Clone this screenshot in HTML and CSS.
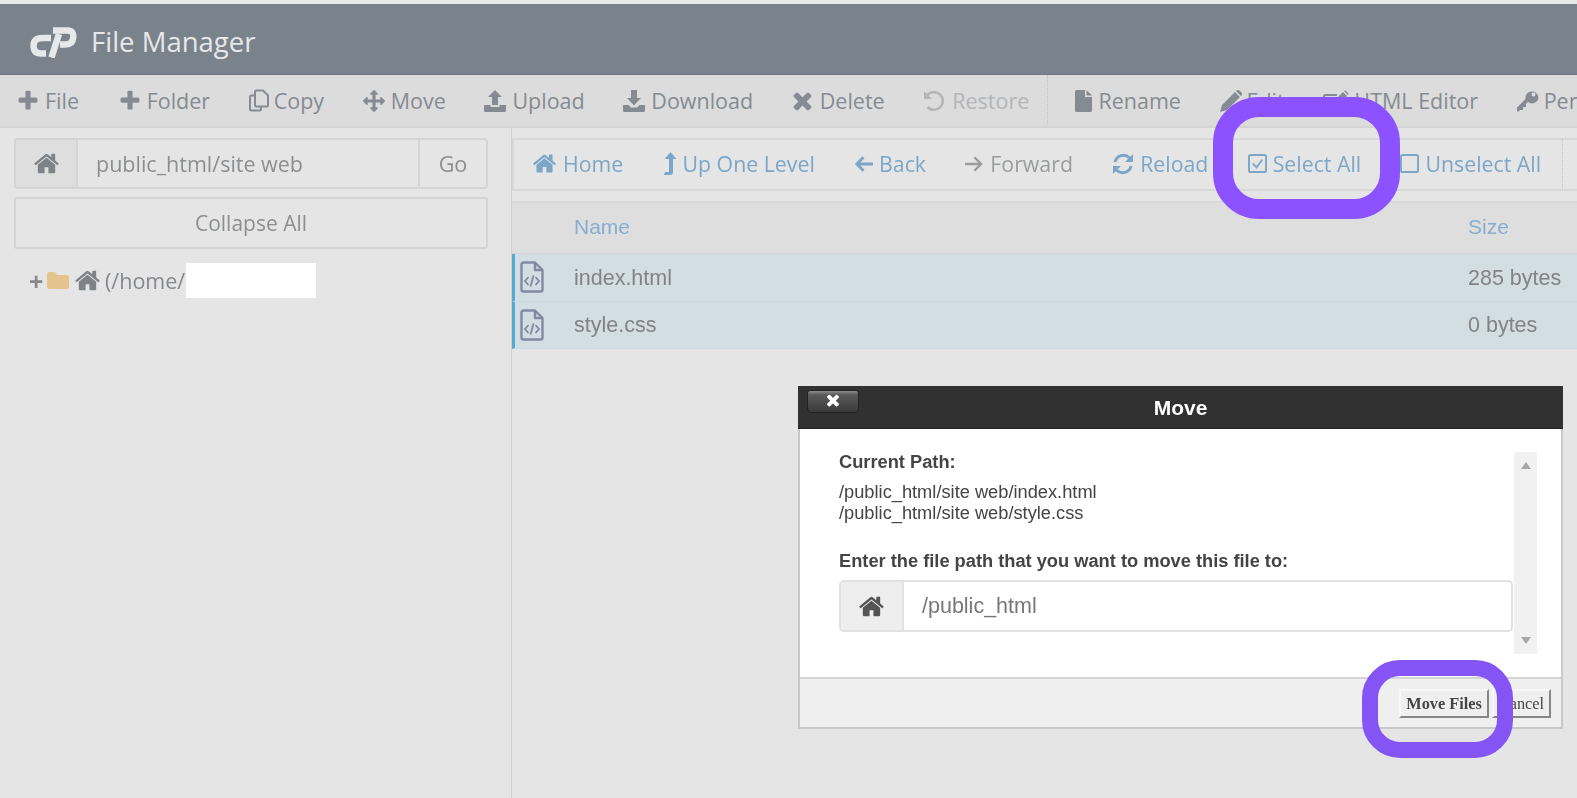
FILE: index.html
```html
<!DOCTYPE html>
<html lang="en">
<head>
<meta charset="utf-8">
<title>File Manager</title>
<link rel="stylesheet" href="styles.css">
</head>
<body>
<svg class="defs" width="0" height="0" aria-hidden="true">
  <symbol id="i-home" viewBox="0 0 1792 1792"><path d="M1472 992v480q0 26-19 45t-45 19h-384v-384h-256v384h-384q-26 0-45-19t-19-45v-480q0-1 .5-3t.5-3l575-474 575 474q1 2 1 6zm223-69l-62 74q-8 9-21 11h-3q-13 0-21-7l-692-577-692 577q-12 8-24 7-13-2-21-11l-62-74q-8-10-7-23.500t11-21.500l719-599q32-26 76-26t76 26l244 204v-195q0-14 9-23t23-9h192q14 0 23 9t9 23v408l219 182q10 8 11 21.500t-7 23.500z"/></symbol>
  <symbol id="i-plus" viewBox="0 0 1792 1792"><path d="M1600 736v192q0 40-28 68t-68 28h-416v416q0 40-28 68t-68 28h-192q-40 0-68-28t-28-68v-416h-416q-40 0-68-28t-28-68v-192q0-40 28-68t68-28h416v-416q0-40 28-68t68-28h192q40 0 68 28t28 68v416h416q40 0 68 28t28 68z"/></symbol>
  <symbol id="i-times" viewBox="0 0 1792 1792"><path d="M1490 1322q0 40-28 68l-136 136q-28 28-68 28t-68-28l-294-294-294 294q-28 28-68 28t-68-28l-136-136q-28-28-28-68t28-68l294-294-294-294q-28-28-28-68t28-68l136-136q28-28 68-28t68 28l294 294 294-294q28-28 68-28t68 28l136 136q28 28 28 68t-28 68l-294 294 294 294q28 28 28 68z"/></symbol>
  <symbol id="i-move" viewBox="0 0 1792 1792"><path d="M1792 896q0 26-19 45l-256 256q-19 19-45 19t-45-19-19-45v-128h-384v384h128q26 0 45 19t19 45-19 45l-256 256q-19 19-45 19t-45-19l-256-256q-19-19-19-45t19-45 45-19h128v-384h-384v128q0 26-19 45t-45 19-45-19l-256-256q-19-19-19-45t19-45l256-256q19-19 45-19t45 19 19 45v128h384v-384h-128q-26 0-45-19t-19-45 19-45l256-256q19-19 45-19t45 19l256 256q19 19 19 45t-19 45-45 19h-128v384h384v-128q0-26 19-45t45-19 45 19l256 256q19 19 19 45z"/></symbol>
  <symbol id="i-copy" viewBox="0 0 20 22"><path fill="none" stroke="currentColor" stroke-width="2" stroke-linejoin="round" d="M6 6H2.500A1.500 1.500 0 0 0 1 7.500V19.500A1.500 1.500 0 0 0 2.500 21H10.500A1.500 1.500 0 0 0 12 19.500V17M6 2.500A1.500 1.500 0 0 1 7.500 1H14L19 6V15.500A1.500 1.500 0 0 1 17.500 17H7.500A1.500 1.500 0 0 1 6 15.500Z"/></symbol>
  <symbol id="i-upload" viewBox="0 0 22 22"><path d="M11 0L18 7H14V15H8V7H4ZM0 15H6.500V17H15.500V15H22V20.500A1.500 1.500 0 0 1 20.500 22H1.500A1.500 1.500 0 0 1 0 20.500Z"/></symbol>
  <symbol id="i-download" viewBox="0 0 22 22"><path d="M8 0H14V8H18L11 15.500L4 8H8ZM0 15H5.500L8 17.500H14L16.500 15H22V20.500A1.500 1.500 0 0 1 20.500 22H1.500A1.500 1.500 0 0 1 0 20.500Z"/></symbol>
  <symbol id="i-restore" viewBox="0 0 22 22"><path fill="none" stroke="currentColor" stroke-width="2.600" d="M4 5.500A8.800 8.800 0 1 1 4.500 17"/><path d="M1 1L9 9H1Z"/></symbol>
  <symbol id="i-file" viewBox="0 0 17 22"><path d="M0 1.500A1.500 1.500 0 0 1 1.500 0H10V7H17V20.500A1.500 1.500 0 0 1 15.500 22H1.500A1.500 1.500 0 0 1 0 20.500ZM11.500 0L17 5.500H11.500Z"/></symbol>
  <symbol id="i-pencil" viewBox="0 0 22 22"><path d="M0 22L2 15L15 2L20 7L7 20ZM16.500 0.500Q18 -0.500 19.500 0.500L21.500 2.500Q22.500 4 21.500 5.500L21 6L16 1Z"/></symbol>
  <symbol id="i-edit" viewBox="0 0 26 22"><path fill="none" stroke="currentColor" stroke-width="2" d="M19 14V19.500A1.500 1.500 0 0 1 17.500 21H2.500A1.500 1.500 0 0 1 1 19.500V6.500A1.500 1.500 0 0 1 2.500 5H14"/><path d="M9 13L20 2L24 6L13 17H9ZM21 1Q22 0 23 1L25 3Q26 4 25 5Z"/></symbol>
  <symbol id="i-key" viewBox="0 0 22 22"><path d="M21.500 7A6.500 6.500 0 0 1 11 12L9 14V17H6V20H3L1.500 21.500H0V17.500L8.500 9A6.500 6.500 0 1 1 21.500 7ZM18.500 4.500A2 2 0 1 0 14.500 4.500A2 2 0 1 0 18.500 4.500Z" fill-rule="evenodd"/></symbol>
  <symbol id="i-up" viewBox="0 0 14 24"><path d="M7.500 0L13.500 7H10V20Q10 23 7 23H1L2 20H6V7H1.500Z"/></symbol>
  <symbol id="i-left" viewBox="0 0 20 18"><path fill="none" stroke="currentColor" stroke-width="3" d="M10 2L3 9L10 16M3 9H20"/></symbol>
  <symbol id="i-right" viewBox="0 0 20 18"><path fill="none" stroke="currentColor" stroke-width="2.400" d="M10 2L17 9L10 16M17 9H0"/></symbol>
  <symbol id="i-reload" viewBox="0 0 22 22"><path fill="none" stroke="currentColor" stroke-width="3" d="M3 9A8.500 8.500 0 0 1 17.500 5M19 13A8.500 8.500 0 0 1 4.500 17"/><path d="M21 1V9H13ZM1 21V13H9Z"/></symbol>
  <symbol id="i-check" viewBox="0 0 20 20"><rect x="1" y="1" width="18" height="18" rx="2" fill="none" stroke="currentColor" stroke-width="2"/><path fill="none" stroke="currentColor" stroke-width="2" d="M5 10L9 14L15 6"/></symbol>
  <symbol id="i-uncheck" viewBox="0 0 20 20"><rect x="1" y="1" width="18" height="18" rx="2" fill="none" stroke="currentColor" stroke-width="2"/></symbol>
  <symbol id="i-code" viewBox="0 0 24 32"><path fill="none" stroke="currentColor" stroke-width="2.400" stroke-linejoin="round" d="M15 1.500H3.500A2 2 0 0 0 1.500 3.500V28.500A2 2 0 0 0 3.500 30.500H20.500A2 2 0 0 0 22.500 28.500V9ZM15 1.500V9H22.500"/><path fill="none" stroke="currentColor" stroke-width="1.800" d="M8.500 16L5 20L8.500 24M15.500 16L19 20L15.500 24M13.500 14.500L10.500 25.500"/></symbol>
</svg>

<div class="app">
  <header class="brand">
    <svg class="logo" viewBox="0 0 47 32" aria-hidden="true"><path fill="none" stroke="currentColor" stroke-width="6.500" d="M21 12H12.500Q3.800 12 3.500 19.500Q3.500 27.500 11 27.500H16"/><path fill="none" stroke="currentColor" stroke-width="6.500" d="M21.500 31.500L29 8"/><path fill="none" stroke="currentColor" stroke-width="6.500" d="M23 4.500H37.500Q43.800 4.500 43.300 11Q42.800 18.500 35.500 18.500H30"/></svg>
    <span class="brand-title">File Manager</span>
  </header>

  <nav class="toolbar">
    <span class="tool tool-plus"><svg class="ic ic-plus"><use href="#i-plus"/></svg>File</span>
    <span class="tool tool-plus"><svg class="ic ic-plus"><use href="#i-plus"/></svg>Folder</span>
    <span class="tool tool-tight"><svg class="ic ic-copy"><use href="#i-copy"/></svg>Copy</span>
    <span class="tool tool-wide"><svg class="ic ic-m"><use href="#i-move"/></svg>Move</span>
    <span class="tool tool-wide"><svg class="ic ic-m"><use href="#i-upload"/></svg>Upload</span>
    <span class="tool tool-wide"><svg class="ic ic-m"><use href="#i-download"/></svg>Download</span>
    <span class="tool tool-del"><svg class="ic ic-times"><use href="#i-times"/></svg>Delete</span>
    <span class="tool tool-off"><svg class="ic ic-m"><use href="#i-restore"/></svg>Restore</span>
    <span class="tool-sep"></span>
    <span class="tool tool-wide"><svg class="ic ic-file"><use href="#i-file"/></svg>Rename</span>
    <span class="tool tool-tight"><svg class="ic ic-m"><use href="#i-pencil"/></svg>Edit</span>
    <span class="tool tool-tight"><svg class="ic ic-edit"><use href="#i-edit"/></svg>HTML Editor</span>
    <span class="tool tool-tight"><svg class="ic ic-m"><use href="#i-key"/></svg>Permissions</span>
  </nav>

  <main class="panes">
    <aside class="side">
      <div class="pathbar">
        <span class="addon"><svg class="ic-home"><use href="#i-home"/></svg></span>
        <span class="path-input">public_html/site web</span>
        <span class="go">Go</span>
      </div>
      <div class="collapse">Collapse All</div>
      <div class="tree">
        <span class="tree-plus">+</span>
        <svg class="folder" viewBox="0 0 22 17" aria-hidden="true"><path d="M0 2A2 2 0 0 1 2 0H8L10 3H20A2 2 0 0 1 22 5V15A2 2 0 0 1 20 17H2A2 2 0 0 1 0 15Z"/></svg>
        <svg class="tree-home"><use href="#i-home"/></svg>
        <span class="tree-text">(/home/</span>
        <span class="redact"></span>
      </div>
    </aside>

    <section class="content">
      <div class="navbar">
        <span class="nav"><svg class="nv nv-home"><use href="#i-home"/></svg>Home</span>
        <span class="nav"><svg class="nv nv-up"><use href="#i-up"/></svg>Up One Level</span>
        <span class="nav"><svg class="nv nv-arrow"><use href="#i-left"/></svg>Back</span>
        <span class="nav nav-off"><svg class="nv nv-arrow"><use href="#i-right"/></svg>Forward</span>
        <span class="nav"><svg class="nv nv-reload"><use href="#i-reload"/></svg>Reload</span>
        <span class="nav"><svg class="nv nv-box"><use href="#i-check"/></svg>Select All</span>
        <span class="nav"><svg class="nv nv-box"><use href="#i-uncheck"/></svg>Unselect All</span>
        <span class="nav-sep"></span>
      </div>
      <div class="table">
        <div class="row row-head"><span></span><span>Name</span><span>Size</span></div>
        <div class="row row-sel"><svg class="filei"><use href="#i-code"/></svg><span>index.html</span><span>285 bytes</span></div>
        <div class="row row-sel"><svg class="filei"><use href="#i-code"/></svg><span>style.css</span><span>0 bytes</span></div>
      </div>
    </section>
  </main>
</div>

<div class="dialog">
  <div class="dlg-head">
    <span class="dlg-close"><svg class="dlg-x"><use href="#i-times"/></svg></span>
    <span class="dlg-title">Move</span>
  </div>
  <div class="dlg-body">
    <div class="dlg-main">
      <p class="dlg-label">Current Path:</p>
      <p class="dlg-paths">/public_html/site web/index.html<br>/public_html/site web/style.css</p>
      <p class="dlg-label dlg-label-2">Enter the file path that you want to move this file to:</p>
      <div class="dlg-input">
        <span class="dlg-addon"><svg class="dlg-home"><use href="#i-home"/></svg></span>
        <span class="dlg-value">/public_html</span>
      </div>
    </div>
    <div class="scroll"><span class="arrow-up"></span><span class="arrow-down"></span></div>
  </div>
  <div class="dlg-foot">
    <span class="btn">Move Files</span>
    <span class="btn">Cancel</span>
  </div>
</div>

<div class="ring ring-a"></div>
<div class="ring ring-b"></div>
</body>
</html>
```
FILE: styles.css
```css
* { box-sizing: border-box; }
html, body { margin: 0; padding: 0; }
body {
  width: 1577px;
  height: 798px;
  overflow: hidden;
  background: #e5e5e5;
  position: relative;
  font-family: "Open Sans", "Liberation Sans", sans-serif;
}
.defs { position: absolute; }
.app {
  display: flex;
  flex-direction: column;
  height: 798px;
  filter: blur(0.55px);
}
.brand {
  flex: none;
  height: 75px;
  border-top: 4px solid #e8e8e8;
  background: #7a828c;
  color: #e6e8ea;
  display: flex;
  align-items: center;
  padding: 5px 0 0 30px;
  gap: 14px;
  box-shadow: inset 0 -1px 0 #6d7680;
}
.logo { width: 47px; height: 32px; color: #e6e8ea; }
.brand-title { font-size: 27.500px; line-height: 36px; }

.toolbar {
  flex: none;
  height: 53px;
  background: #dcdcdc;
  border-bottom: 2px solid #d4d4d4;
  display: flex;
  align-items: center;
  padding-left: 16px;
  gap: 38.600px;
  color: #858b91;
  font-size: 21.500px;
  white-space: nowrap;
  overflow: hidden;
}
.tool { display: flex; align-items: center; gap: 7px; }
.tool-plus { gap: 5px; }
.tool-tight { gap: 5px; }
.tool-wide { gap: 6px; }
.tool-del { gap: 7px; }
.tool-off { color: #b4b6b8; }
.tool-sep { width: 0; height: 52px; border-left: 1px dotted #c2c2c2; margin: 0 -11px 0 -21px; }
.ic { fill: currentColor; flex: none; width: 22px; height: 22px; }
.ic-plus { width: 24px; height: 24px; }
.ic-times { width: 27px; height: 27px; margin: 0 -3px; }
.ic-copy { width: 20px; height: 23px; }
.ic-file { width: 17px; height: 22px; }
.ic-edit { width: 26px; height: 22px; }

.panes { flex: 1; display: flex; min-height: 0; }
.side {
  flex: none;
  width: 512px;
  padding: 10px 23px 0 14px;
  border-right: 1px solid #d0d0d0;
}
.pathbar {
  display: flex;
  height: 51px;
  border: 2px solid #d4d4d4;
  border-radius: 4px;
  color: #8c8e90;
  font-size: 21.500px;
  align-items: stretch;
}
.addon {
  width: 62px;
  background: #dedede;
  border-right: 2px solid #d4d4d4;
  display: flex;
  align-items: center;
  justify-content: center;
}
.ic-home { width: 27px; height: 27px; fill: #7f8388; }
.path-input { flex: 1; padding-left: 18px; display: flex; align-items: center; }
.go {
  width: 68px;
  border-left: 2px solid #d4d4d4;
  display: flex;
  align-items: center;
  justify-content: center;
}
.collapse {
  margin-top: 8px;
  height: 52px;
  border: 2px solid #d4d4d4;
  border-radius: 3px;
  color: #8c8e90;
  font-size: 21px;
  display: flex;
  align-items: center;
  justify-content: center;
}
.tree {
  margin: 14px 0 0 15px;
  height: 35px;
  display: flex;
  align-items: center;
  color: #85888c;
  font-size: 21.500px;
}
.tree-plus { width: 18px; font-size: 25px; font-weight: 700; line-height: 30px; }
.folder { width: 22px; height: 17px; fill: #e4c48c; margin-right: 5px; }
.tree-home { width: 27px; height: 27px; fill: #7f8388; margin-right: 4px; }
.tree-text { width: 81px; overflow: hidden; white-space: nowrap; }
.redact { width: 130px; height: 35px; background: #fff; }

.content { flex: 1; min-width: 0; overflow: hidden; padding-top: 10px; }
.navbar {
  height: 53px;
  border: 2px solid #d8d8d8;
  border-right: 0;
  display: flex;
  align-items: center;
  padding: 0 0 2px 18px;
  gap: 39.300px;
  color: #7ca6c8;
  font-size: 21.300px;
  white-space: nowrap;
}
.nav { display: flex; align-items: center; gap: 6px; }
.nav-off { color: #9a9c9e; }
.nv { fill: currentColor; flex: none; }
.nv-home { width: 25px; height: 25px; }
.nv-up { width: 14px; height: 24px; }
.nv-arrow { width: 19px; height: 18px; }
.nv-reload { width: 22px; height: 22px; }
.nv-box { width: 19px; height: 19px; }
.nav-sep { height: 51px; border-left: 1px dotted #c4c4c4; margin-left: -18px; }

.table { margin-top: 10px; font-family: "Liberation Sans", Arial, sans-serif; }
.row {
  display: grid;
  grid-template-columns: 62px 894px 1fr;
  align-items: center;
  height: 47.500px;
  font-size: 21.500px;
  color: #808488;
  white-space: nowrap;
}
.row-head {
  height: 53px;
  background: #dedede;
  border-top: 2px solid #d8d8d8;
  border-bottom: 1px solid #d4d4d4;
  padding-bottom: 3px;
  color: #86aed0;
  font-size: 21px;
}
.row-sel {
  background: #d2dde4;
  border-left: 3px solid #56a9cf;
  border-bottom: 1px solid #cdd8df;
  padding-top: 2px;
  grid-template-columns: 59px 894px 1fr;
}
.filei { width: 24px; height: 32px; color: #8489a0; margin: -2px 0 0 5px; }

.dialog {
  position: absolute;
  left: 798px;
  top: 386px;
  width: 765px;
  height: 343px;
  background: #efefef;
  border: 2px solid #c8c8c8;
  border-top: 0;
  display: flex;
  flex-direction: column;
  font-family: "Liberation Sans", Arial, sans-serif;
  filter: blur(0.35px);
}
.dlg-head {
  flex: none;
  height: 43px;
  margin: 0 -2px;
  background: #313131;
  border-bottom: 1px solid #222;
  position: relative;
  display: flex;
  align-items: center;
  justify-content: center;
}
.dlg-close {
  position: absolute;
  left: 9px;
  top: 4px;
  width: 52px;
  height: 23px;
  background: linear-gradient(#8d8d8d 0, #5a5a5a 18%, #3a3a3a 100%);
  border: 1px solid #222;
  border-radius: 3px 3px 5px 5px;
  display: flex;
  align-items: center;
  justify-content: center;
}
.dlg-x { width: 18px; height: 18px; fill: #fff; margin-top: -4px; }
.dlg-title { color: #fff; font-size: 21px; font-weight: 700; margin-top: 2px; }
.dlg-body {
  flex: none;
  height: 250px;
  background: #fff;
  border-bottom: 2px solid #d4d4d4;
  display: flex;
  padding: 23px 24px 0 39px;
}
.dlg-main { width: 683px; }
.dlg-label { margin: 0; font-size: 18.250px; font-weight: 700; line-height: 20px; color: #444; }
.dlg-paths { margin: 9px 0 0; font-size: 18.250px; line-height: 21px; color: #444; }
.dlg-label-2 { margin-top: 28px; }
.dlg-input {
  margin-top: 9px;
  height: 52px;
  display: flex;
  border: 2px solid #e2e2e2;
  border-radius: 5px;
  color: #777;
  font-size: 21.500px;
}
.dlg-addon {
  width: 63px;
  background: #eee;
  border-right: 2px solid #e2e2e2;
  display: flex;
  align-items: center;
  justify-content: center;
}
.dlg-home { width: 27px; height: 27px; fill: #555; }
.dlg-value { padding-left: 18px; display: flex; align-items: center; }
.scroll {
  flex: none;
  width: 23px;
  height: 202px;
  margin-left: 1px;
  background: #f1f1f1;
  display: flex;
  flex-direction: column;
  justify-content: space-between;
  align-items: center;
  padding: 10px 0;
}
.arrow-up { border: 5px solid transparent; border-top: 0; border-bottom: 7px solid #a8a8a8; }
.arrow-down { border: 5px solid transparent; border-bottom: 0; border-top: 7px solid #a8a8a8; }
.dlg-foot {
  flex: 1;
  display: flex;
  justify-content: flex-end;
  align-items: flex-start;
  padding: 10px 10px 0 0;
  gap: 3px;
}
.btn {
  height: 29px;
  padding: 0 5px;
  display: flex;
  align-items: center;
  background: #efefef;
  border: 2px solid;
  border-color: #f8f8f8 #868686 #868686 #f8f8f8;
  font-family: "Liberation Serif", "Times New Roman", serif;
  font-weight: 700;
  font-size: 16.300px;
  color: #444;
}
.btn + .btn { font-weight: 400; }

.ring {
  position: absolute;
  border-style: solid;
  background: transparent;
}
.ring-a {
  left: 1213px;
  top: 97px;
  width: 187px;
  height: 122px;
  border-width: 20px;
  border-color: #8c52ff;
  border-radius: 46px;
}
.ring-b {
  left: 1362px;
  top: 660px;
  width: 151px;
  height: 98px;
  border-width: 16px;
  border-color: #8454f5;
  border-radius: 38px;
}
```
